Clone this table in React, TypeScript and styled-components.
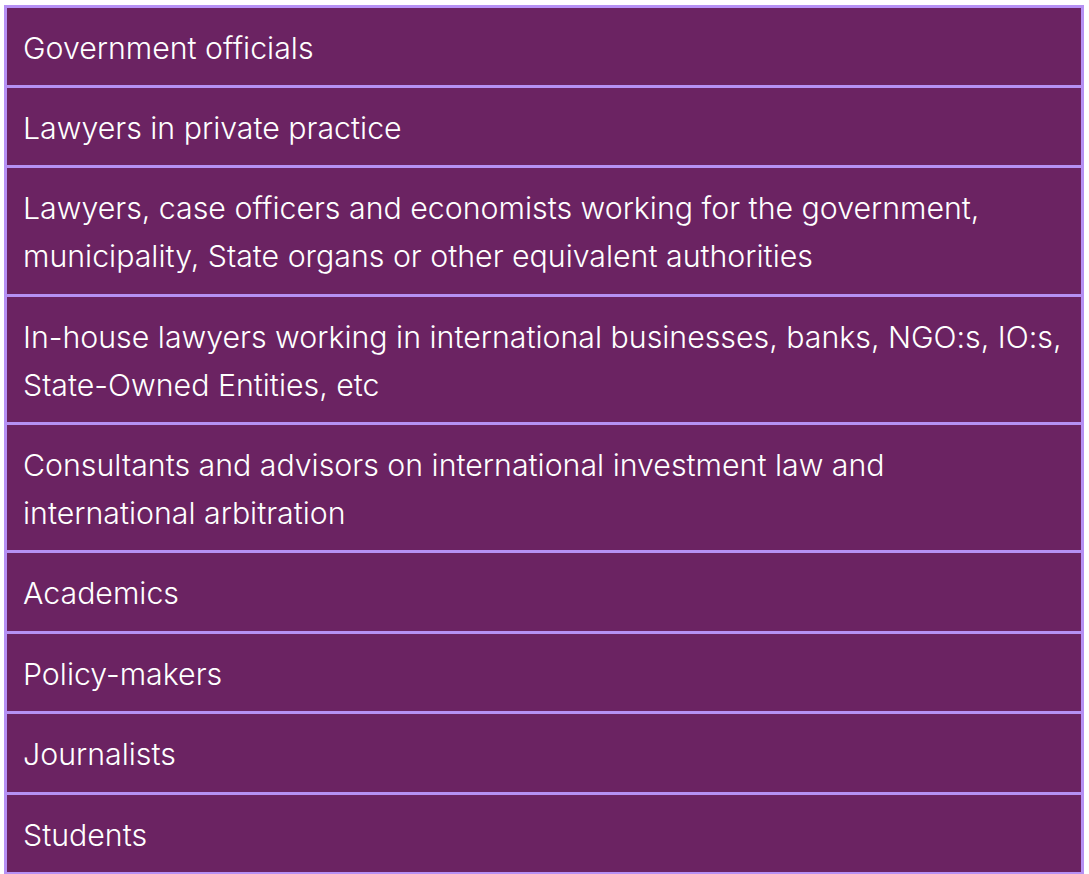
import React from 'react';
import styled, { createGlobalStyle } from 'styled-components';

const GlobalStyle = createGlobalStyle`
  html, body {
    margin: 0;
    padding: 0;
    background: #ffffff;
  }
  body {
    font-family: Inter, "Noto Sans", "Liberation Sans", sans-serif;
  }
`;

const Table = styled.div`
  margin: 4.5px 5px 0 4px;
  border: 3px solid #b690f4;
  border-top: none;
  display: flex;
  flex-direction: column;
`;

const Row = styled.div`
  border-top: 3px solid #b690f4;
  background: #6b2362;
  color: #ffffff;
  padding: 16px 18px 13.4px 16px;
  font-size: 30.3px;
  line-height: 48px;
  font-weight: 300;
`;

const audiences = [
  'Government officials',
  'Lawyers in private practice',
  'Lawyers, case officers and economists working for the government, municipality, State organs or other equivalent authorities',
  'In-house lawyers working in international businesses, banks, NGO:s, IO:s, State-Owned Entities, etc',
  'Consultants and advisors on international investment law and international arbitration',
  'Academics',
  'Policy-makers',
  'Journalists',
  'Students',
];

export default function App() {
  return (
    <>
      <GlobalStyle />
      <Table>
        {audiences.map((item) => (
          <Row key={item}>{item}</Row>
        ))}
      </Table>
    </>
  );
}
